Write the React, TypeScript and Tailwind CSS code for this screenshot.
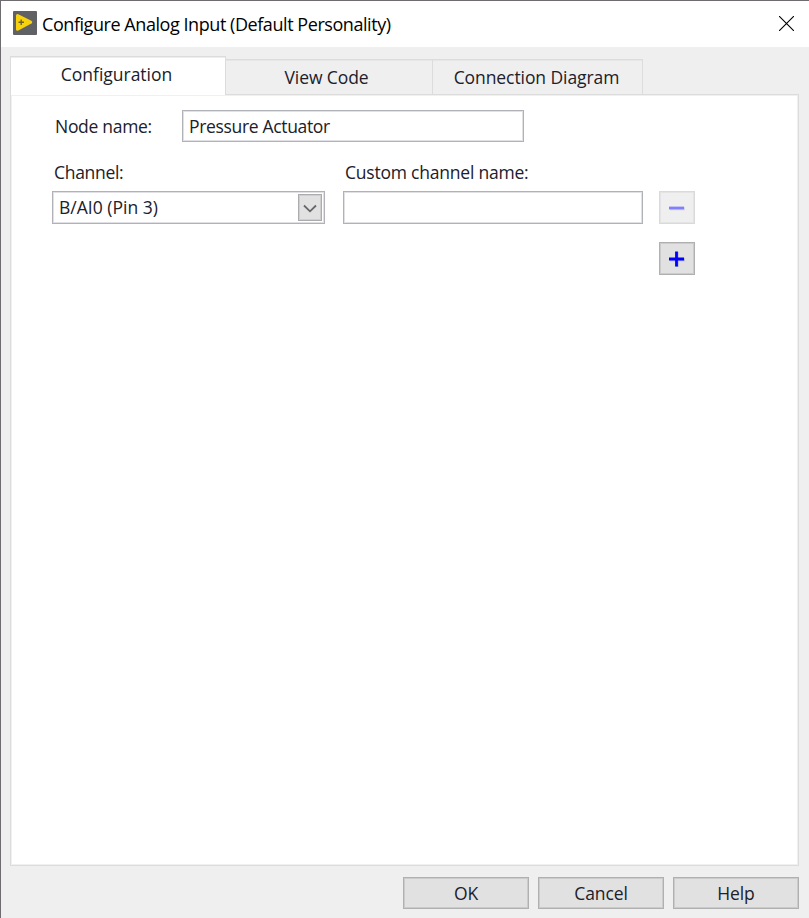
import React from 'react';

const inputBox = 'border border-[#b1b1b8] bg-white text-left shadow-[inset_0_0_0_1px_#e0e0e5]';

function LogoIcon() {
  return (
    <svg width="24" height="24" viewBox="0 0 24 24">
      <rect width="24" height="24" rx="1" fill="#606164" />
      <path d="M4.6 4.6L17.6 11.2L4.6 18.2Z" fill="#f8d20b" stroke="#f8d20b" strokeWidth="3.2" strokeLinejoin="round" />
      <path d="M5.5 11.3H11M8.2 8.5V14" stroke="#69642f" strokeWidth="1.4" />
    </svg>
  );
}

function FooterButton({ label }: { label: string }) {
  return (
    <button className="h-8 w-[126px] border border-[#b0b0b0] bg-[#e1e1e1] pb-px tracking-[-0.1px] shadow-[inset_0_0_0_1px_#cbcbcb]">{label}</button>
  );
}

export default function App() {
  return (
    <div className="relative flex h-[918px] w-[809px] flex-col overflow-hidden border-t border-l border-[#6e6c6e] bg-[#efefef] font-['Open_Sans',sans-serif] text-[17.5px] leading-6 tracking-[-0.3px] text-[#20202a]">
      <i className="absolute top-[376px] -left-px h-[5px] w-px bg-[#6c2038]" />
      <i className="absolute top-[546px] -left-px h-[7px] w-px bg-[#571452]" />
      <i className="absolute top-[577px] -left-px h-[7px] w-px bg-[#571452]" />
      <i className="absolute -top-px left-[116px] h-px w-[36px] bg-[#4c4a4c]" />
      <header className="flex h-[46px] shrink-0 items-center bg-white pl-3">
        <span className="mb-0.5">
          <LogoIcon />
        </span>
        <h1 className="ml-[5px] flex-1 text-[18px] tracking-[-0.44px] text-black">Configure Analog Input (Default Personality)</h1>
        <button aria-label="Close" className="mr-[15px] mb-px">
          <svg width="15" height="15" viewBox="0 0 15 15" stroke="#000" strokeWidth="1.1">
            <path d="M0 0L15 15M15 0L0 15" />
          </svg>
        </button>
      </header>
      <main className="flex flex-1 flex-col pt-[9px] pl-[9px]">
        <nav className="relative z-10 -mb-px flex h-[39px] items-end">
          <button className="h-[39px] w-[216px] border-x border-t border-[#dcdcdc] bg-white pr-[3px] pb-[5px] tracking-[-0.02px] shadow-[inset_0_1px_0_#ededed]">Configuration</button>
          <button className="h-9 w-[207px] border-y border-r border-[#dcdcdc] pr-[5px] pb-px tracking-[-0.1px] shadow-[inset_0_1px_0_#e6e6e6]">View Code</button>
          <button className="h-9 w-[210px] border-y border-r border-[#dcdcdc] pr-0.5 pb-px tracking-[-0.08px] shadow-[inset_0_1px_0_#e6e6e6]">Connection Diagram</button>
        </nav>
        <section className="h-[772px] w-[789px] border border-[#dcdcdc] bg-white shadow-[inset_0_0_0_1px_#f0f0f0]">
          <div className="flex items-center pt-[15px] pl-[44px]">
            <label className="w-[127px]">Node name:</label>
            <div className={`${inputBox} flex h-8 w-[342px] items-center pl-1.5 tracking-[-0.33px]`}>Pressure Actuator</div>
          </div>
          <div className="mt-[18px] flex pl-[43px]">
            <span className="w-[291px]">Channel:</span>
            <span className="tracking-[-0.22px]">Custom channel name:</span>
          </div>
          <div className="mt-[7px] flex items-start pl-[41px]">
            <div className={`${inputBox} flex h-[33px] w-[273px] items-center justify-between pr-[2px] pl-1.5`}>
              <span className="mb-0.5 tracking-[0.02px]">B/AI0 (Pin 3)</span>
              <button aria-label="Open channel list" className="flex h-[27px] w-6 items-center justify-center border border-[#acacae] bg-[#e1e1e1] pt-0.5 shadow-[inset_0_0_0_1px_#cecece]">
                <svg width="14" height="9" viewBox="0 0 14 9" fill="none" stroke="#66666b" strokeWidth="1.8">
                  <path d="M1 1.5L7 7.3L13 1.5" />
                </svg>
              </button>
            </div>
            <div className={`${inputBox} ml-[18px] h-[33px] w-[300px]`} />
            <div className="ml-4 flex flex-col gap-[18px]">
              <button aria-label="Remove channel" className="flex h-[33px] w-9 items-center justify-center border border-[#dadada] bg-[#efefef] shadow-[inset_0_0_0_1px_#e4e4e4]">
                <svg width="18" height="18" viewBox="0 0 18 18">
                  <path d="M2 9.8H17" stroke="#d5d5e4" strokeWidth="3" />
                  <path d="M1 9H16" stroke="#8080ff" strokeWidth="2.8" />
                </svg>
              </button>
              <button aria-label="Add channel" className="flex h-[33px] w-9 items-center justify-center border border-[#b0b0b0] bg-[#e1e1e1] shadow-[inset_0_0_0_1px_#cbcbcb]">
                <svg width="18" height="18" viewBox="0 0 18 18">
                  <path d="M2 9.8H17M9.3 2V17" stroke="#bcbccb" strokeWidth="3" />
                  <path d="M1 9H16M8.5 1.5V16.5" stroke="#0000ff" strokeWidth="2.8" />
                </svg>
              </button>
            </div>
          </div>
        </section>
        <footer className="mt-[11px] mr-[10px] flex justify-end gap-[9px]">
          <FooterButton label="OK" />
          <FooterButton label="Cancel" />
          <FooterButton label="Help" />
        </footer>
      </main>
    </div>
  );
}
